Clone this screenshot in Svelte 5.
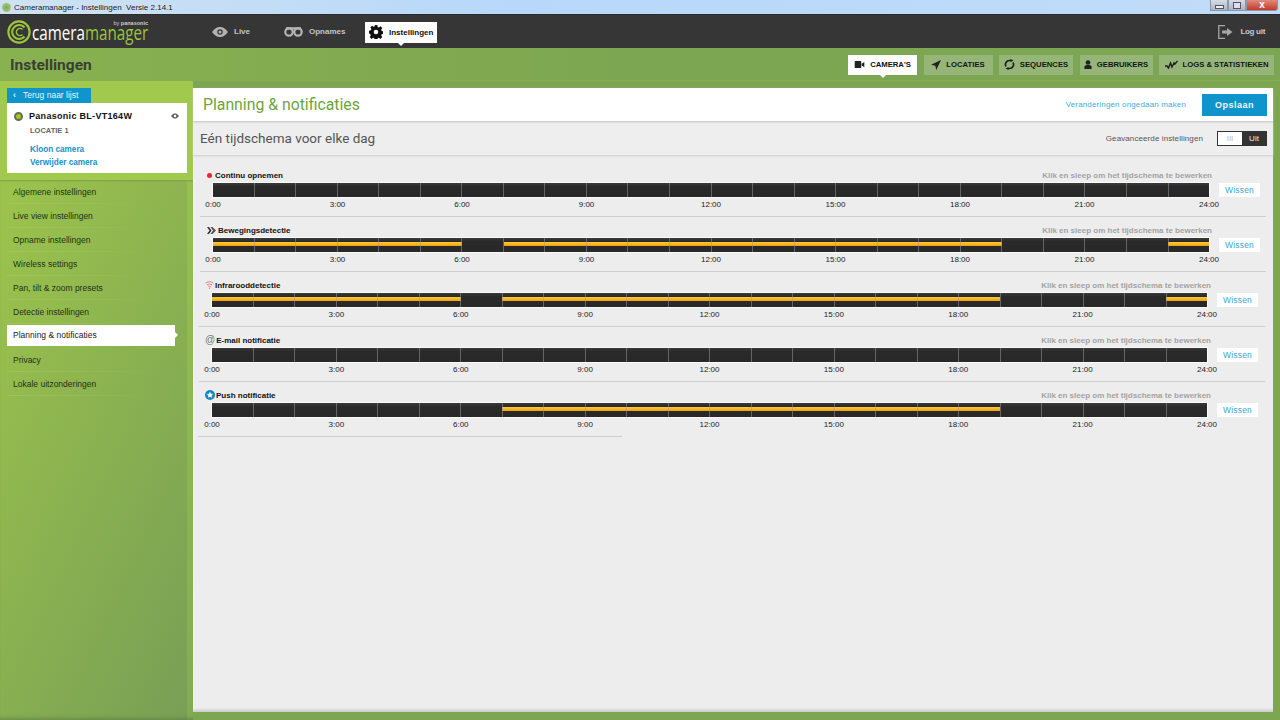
<script lang="ts">
	const menu = [
		'Algemene instellingen',
		'Live view instellingen',
		'Opname instellingen',
		'Wireless settings',
		'Pan, tilt & zoom presets',
		'Detectie instellingen',
		'Planning & notificaties',
		'Privacy',
		'Lokale uitzonderingen'
	];

	const labels = ['0:00', '3:00', '6:00', '9:00', '12:00', '15:00', '18:00', '21:00', '24:00'];
	const hours = Array.from({ length: 24 }, (_, i) => i);

	const rows = [
		{ name: 'Continu opnemen', icon: 'rec', spans: [], shift: false },
		{ name: 'Bewegingsdetectie', icon: 'motion', spans: [[0, 6], [7, 19], [23, 24]], shift: false },
		{ name: 'Infrarooddetectie', icon: 'ir', spans: [[0, 6], [7, 19], [23, 24]], shift: true },
		{ name: 'E-mail notificatie', icon: 'mail', spans: [], shift: true },
		{ name: 'Push notificatie', icon: 'push', spans: [[7, 19]], shift: true }
	];
</script>

<div class="app">
	<div class="titlebar">
		<span class="appicon"></span>
		<span class="wintitle">Cameramanager - Instellingen&nbsp; Versie 2.14.1</span>
		<div class="winbtns">
			<span class="wb"><i class="min"></i></span>
			<span class="wb"><i class="max"></i></span>
			<span class="wb close">x</span>
		</div>
	</div>

	<header class="topnav">
		<div class="logo">
			<svg width="24" height="24" viewBox="0 0 24 24" fill="none" stroke="#9cc43f">
				<circle cx="12" cy="12" r="10.6" stroke-width="2.2" />
				<path d="M17.5 7.5A7 7 0 1 0 17.5 16.5" stroke-width="2" />
				<path d="M15.5 9.5A3.6 3.6 0 1 0 15.5 14.5" stroke-width="1.4" />
			</svg>
			<div class="wordmark">
				<span class="by">by <b>panasonic</b></span>
				<span class="word">camera<em>manager</em></span>
			</div>
		</div>
		<nav class="mainnav">
			<a class="nav live" href="#live">
				<svg width="16" height="10" viewBox="0 0 16 10"><path fill="#b4b4b4" d="M0 5C3 1 5.500 0 8 0s5 1 8 5c-3 4-5.500 5-8 5S3 9 0 5z" /><circle cx="8" cy="5" r="2.800" fill="#363636" /><circle cx="8" cy="5" r="1.500" fill="#b4b4b4" /></svg>
				Live
			</a>
			<a class="nav opn" href="#opnames">
				<svg width="19" height="10" viewBox="0 0 19 10" fill="none" stroke="#b4b4b4" stroke-width="2.200"><circle cx="5" cy="5" r="3.700" /><circle cx="14" cy="5" r="3.700" /><path d="M2 1.300h15" /></svg>
				Opnames
			</a>
			<a class="nav active" href="#instellingen">
				<svg width="14" height="14" viewBox="0 0 14 14"><path fill="#111" fill-rule="evenodd" d="M5.700 0h2.600l.4 1.900 1.200.5 1.600-1.100 1.800 1.800-1.100 1.600.5 1.200 1.900.4v2.600l-1.900.4-.5 1.200 1.100 1.600-1.800 1.800-1.600-1.100-1.200.5-.4 1.900H5.700l-.4-1.900-1.200-.5-1.600 1.100-1.800-1.800 1.100-1.600-.5-1.200L0 8.300V5.700l1.900-.4.500-1.200-1.100-1.600 1.800-1.800 1.600 1.100 1.200-.5zM7 4.700a2.300 2.300 0 1 0 0 4.600 2.300 2.300 0 0 0 0-4.600z" /></svg>
				Instellingen
			</a>
		</nav>
		<a class="logout" href="#logout">
			<svg width="15" height="14" viewBox="0 0 15 14" fill="none" stroke="#a8a8a8"><path d="M7 .7H.8v12.600H7" stroke-width="1.300" /><path fill="#a8a8a8" stroke="none" d="M4 5.500h5V3l5.500 4L9 11V8.500H4z" /></svg>
			Log uit
		</a>
	</header>

	<div class="pagehead">
		<h1>Instellingen</h1>
		<div class="tabs">
			<a class="tab active" href="#cameras">
				<svg width="11" height="7" viewBox="0 0 11 8"><rect width="7.500" height="8" rx="1" fill="#222" /><path fill="#222" d="M8 3l3-2v6L8 5z" /></svg>
				CAMERA'S
			</a>
			<a class="tab" href="#locaties">
				<svg width="10" height="10" viewBox="0 0 11 11"><path fill="#222" d="M11 0L5.800 11 4.700 6.300 0 5.200z" /></svg>
				LOCATIES
			</a>
			<a class="tab" href="#sequences">
				<svg width="11" height="11" viewBox="0 0 11 11" fill="none" stroke="#222" stroke-width="1.700"><path d="M2 7.500A4 4 0 0 1 5.500 1.500H7M9 3.500A4 4 0 0 1 5.500 9.500H4" /><path fill="#222" stroke="none" d="M6.500 0l3 1.500-3 1.800zM4.500 8l-3 1.500 3 1.500z" /></svg>
				SEQUENCES
			</a>
			<a class="tab" href="#gebruikers">
				<svg width="8" height="9" viewBox="0 0 8 10"><circle cx="4" cy="2.800" r="2.600" fill="#222" /><path fill="#222" d="M0 10V7.500C0 6 1.500 5.500 4 5.500s4 .5 4 2V10z" /></svg>
				GEBRUIKERS
			</a>
			<a class="tab" href="#logs">
				<svg width="13" height="9" viewBox="0 0 13 9" fill="none" stroke="#222" stroke-width="1.500"><path d="M0 6h2l1.500 2L5.500 3 7 7l2-4 1 1 2.500-3" /></svg>
				LOGS &amp; STATISTIEKEN
			</a>
		</div>
	</div>

	<div class="main">
		<aside class="sidebar">
			<div class="sidetop">
				<a class="back" href="#back"><span class="chev">‹</span> Terug naar lijst</a>
				<div class="card">
					<div class="cardhead">
						<span class="status"></span>
						<strong>Panasonic BL-VT164W</strong>
						<svg class="cardeye" width="8" height="6" viewBox="0 0 16 10"><path fill="#666" d="M0 5C3 1 5.500 0 8 0s5 1 8 5c-3 4-5.500 5-8 5S3 9 0 5z" /><circle cx="8" cy="5" r="2.500" fill="#fff" /></svg>
					</div>
					<div class="loc">LOCATIE 1</div>
					<a class="cardlink first" href="#kloon">Kloon camera</a>
					<a class="cardlink" href="#verwijder">Verwijder camera</a>
				</div>
			</div>
			<ul class="menu">
				{#each menu as item}
					<li class:active={item === 'Planning & notificaties'}>{item}</li>
				{/each}
			</ul>
		</aside>

		<section class="content">
			<div class="head">
				<h2>Planning &amp; notificaties</h2>
				<a class="undo" href="#undo">Veranderingen ongedaan maken</a>
				<button class="save">Opslaan</button>
			</div>
			<div class="subhead">
				<h3>Eén tijdschema voor elke dag</h3>
				<span class="advlabel">Geavanceerde instellingen</span>
				<div class="toggle"><span class="off">III</span><span class="on">Uit</span></div>
			</div>

			<div class="rows">
				{#each rows as row, i}
					<div class="row" class:shift={row.shift} class:last={i === rows.length - 1}>
						<div class="rowtitle">
							<span class="rowicon {row.icon}">
								{#if row.icon === 'rec'}
									<svg width="5" height="5" viewBox="0 0 5 5"><circle cx="2.500" cy="2.500" r="2.500" fill="#ee2233" /></svg>
								{:else if row.icon === 'motion'}
									<svg width="9" height="7" viewBox="0 0 9 7"><path fill="#333" d="M0 0h2l2.500 3.500L2 7H0l2.500-3.500z" /><path fill="#555" d="M3.500 0h2L9 3.500 5.500 7h-2L6 3.500z" /></svg>
								{:else if row.icon === 'ir'}
									<svg width="9" height="8" viewBox="0 0 9 8" fill="none" stroke="#e8707a" stroke-width="1"><path d="M.5 2.200c2.500-2 5.500-2 8 0M2 4c1.600-1.200 3.400-1.200 5 0M3.300 5.700c.8-.6 1.600-.6 2.400 0" /><circle cx="4.500" cy="7.200" r=".6" fill="#e8707a" stroke="none" /></svg>
								{:else if row.icon === 'mail'}
									<span class="at">@</span>
								{:else}
									<svg width="10" height="10" viewBox="0 0 10 10"><circle cx="5" cy="5" r="5" fill="#1488c0" /><path fill="#fff" d="M5 1.800l1 2 2.200.3-1.600 1.500.4 2.200-2-1-2 1 .4-2.200L1.800 4.100 4 3.800z" /></svg>
								{/if}
							</span>
							<b>{row.name}</b>
							<span class="hint">Klik en sleep om het tijdschema te bewerken</span>
						</div>
						<div class="track">
							<div class="timeline">
								<div class="bar">
									{#each row.spans as [from, to]}
										<span class="span" style="left:{(from / 24) * 100}%;width:{((to - from) / 24) * 100}%"></span>
									{/each}
									<div class="cells">
										{#each hours as h}
											<span class="cell" class:first={h === 0}></span>
										{/each}
									</div>
								</div>
								<div class="labels">
									{#each labels as label}
										<span class="lab"><span>{label}</span></span>
									{/each}
								</div>
							</div>
							<button class="wissen">Wissen</button>
						</div>
					</div>
				{/each}
				<div class="enddivider"></div>
			</div>
		</section>
	</div>
</div>

<style>
	:global(body) {
		margin: 0;
		font-family: 'Liberation Sans', Arial, sans-serif;
	}

	a {
		text-decoration: none;
		color: inherit;
	}

	.app {
		width: 1280px;
		height: 720px;
		display: flex;
		flex-direction: column;
		overflow: hidden;
		background: #7ca651;
	}

	.titlebar {
		height: 14px;
		flex: none;
		display: flex;
		align-items: center;
		padding-left: 2px;
		background: linear-gradient(90deg, #cfe2f2, #b7d8fa 40%, #c0dcf8);
		font-size: 8px;
		color: #222;
	}

	.appicon {
		width: 9px;
		height: 9px;
		border-radius: 50%;
		margin-right: 3px;
		background: radial-gradient(circle, #7bb043, #b5c9a0);
	}

	.winbtns {
		margin-left: auto;
		margin-right: 2px;
		margin-top: -3px;
		display: flex;
		height: 11px;
	}

	.wb {
		width: 18px;
		height: 11px;
		display: flex;
		align-items: center;
		justify-content: center;
		border: 1px solid #8a97a6;
		border-top: 0;
		box-sizing: border-box;
		background: linear-gradient(#d5dde6, #a9b5c4);
	}

	.wb.close {
		width: 32px;
		border-radius: 0 0 3px 0;
		background: linear-gradient(#e08a7c, #c2392b);
		color: #fff;
		font-weight: bold;
		font-size: 10px;
		line-height: 1;
	}

	.min {
		width: 7px;
		height: 2px;
		margin-top: 3px;
		background: #eef;
		border: 1px solid #556;
	}

	.max {
		width: 6px;
		height: 5px;
		border: 1px solid #556;
		background: #dde;
	}

	.topnav {
		height: 34px;
		flex: none;
		box-sizing: border-box;
		display: flex;
		align-items: center;
		background: #363636;
		border-top: 1px solid #2b2b2b;
		padding: 0 15px 0 7px;
	}

	.logo {
		display: flex;
		align-items: center;
		width: 205px;
		flex: none;
		gap: 1px;
	}

	.wordmark {
		width: 116px;
		display: flex;
		flex-direction: column;
		align-items: flex-end;
		margin-top: -4px;
	}

	.by {
		font-size: 5.500px;
		line-height: 6px;
		color: #cfcfcf;
	}

	.word {
		align-self: flex-start;
		font-family: 'Open Sans', sans-serif;
		font-weight: 400;
		font-size: 20px;
		line-height: 14px;
		white-space: nowrap;
		color: #fff;
		transform: scaleX(0.76);
		transform-origin: left center;
	}

	.word em {
		font-style: normal;
		color: #9cc43f;
	}

	.mainnav {
		display: flex;
		align-items: center;
	}

	.nav {
		display: flex;
		align-items: center;
		gap: 6px;
		font-size: 8px;
		color: #c4c4c4;
		font-weight: bold;
	}

	.live {
		width: 72px;
	}

	.opn {
		width: 81px;
	}

	.nav.active {
		position: relative;
		box-sizing: border-box;
		width: 72px;
		height: 21px;
		padding-left: 4px;
		background: #fff;
		color: #111;
		margin-top: 1px;
	}

	.nav.active::after,
	.tab.active::after {
		content: '';
		position: absolute;
		left: 50%;
		bottom: -3px;
		margin-left: -3px;
		border: 3px solid transparent;
		border-bottom: 0;
		border-top-color: #fff;
	}

	.logout {
		margin-left: auto;
		display: flex;
		align-items: center;
		gap: 7px;
		font-size: 8px;
		font-weight: bold;
		letter-spacing: -0.3px;
		color: #c8c8c8;
	}

	.pagehead {
		height: 33px;
		flex: none;
		display: flex;
		align-items: center;
		padding: 0 6px 0 10px;
		background: linear-gradient(90deg, #88b150, #7ca651 50%);
		box-shadow: inset 0 -1px 0 #86ae50;
	}

	h1 {
		margin: 0;
		font-family: Roboto, sans-serif;
		font-size: 15.500px;
		font-weight: 700;
		color: #3a3f36;
	}

	.tabs {
		margin-left: auto;
		display: grid;
		grid-template-columns: 69px 69px 74px 73px 115px;
		gap: 6.500px;
	}

	.tab {
		position: relative;
		height: 20px;
		display: flex;
		align-items: center;
		justify-content: center;
		gap: 5px;
		background: #95b678;
		font-size: 7.700px;
		font-weight: bold;
		white-space: nowrap;
		color: #141414;
	}

	.tab.active {
		background: #fff;
		color: #111;
	}

	.main {
		flex: 1;
		min-height: 0;
		display: flex;
	}

	.sidebar {
		width: 193px;
		flex: none;
		display: flex;
		flex-direction: column;
	}

	.sidetop {
		height: 99px;
		flex: none;
		box-sizing: border-box;
		padding: 7px 6px 0 7px;
		background: #a1c94e;
	}

	.back {
		display: block;
		width: 84px;
		height: 15px;
		box-sizing: border-box;
		padding-left: 6px;
		line-height: 15px;
		background: #0f94cb;
		color: #e6f4fa;
		font-size: 8.500px;
	}

	.chev {
		font-weight: bold;
		margin-right: 5px;
	}

	.card {
		height: 70px;
		box-sizing: border-box;
		padding: 7px 8px 0 7px;
		background: #fff;
	}

	.cardhead {
		display: flex;
		align-items: center;
		gap: 6px;
		height: 12px;
	}

	.cardhead strong {
		font-size: 9px;
		letter-spacing: 0.3px;
		color: #111;
		flex: 1;
	}

	.status {
		width: 5px;
		height: 5px;
		border-radius: 50%;
		background: #a0c820;
		border: 2px solid #666f55;
	}

	.loc {
		margin: 4px 0 0 16px;
		font-size: 7.500px;
		font-weight: bold;
		color: #666;
	}

	.cardlink {
		display: block;
		margin-left: 16px;
		margin-top: 3px;
		font-size: 8.200px;
		font-weight: bold;
		line-height: 10px;
		color: #1690c9;
	}

	.cardlink.first {
		margin-top: 10px;
	}

	.menu {
		flex: 1;
		list-style: none;
		margin: 0;
		padding: 0;
		background:
			linear-gradient(115deg, #9cc44c, #789f55) 0 0 / 187px 100% no-repeat,
			linear-gradient(#96c04f, #82ac54);
		box-shadow: inset 0 2px 2px -1px #7e9f4a, inset 0 -6px 5px -5px #5f8245;
	}

	.menu li {
		position: relative;
		width: 168px;
		height: 24px;
		margin-left: 7px;
		box-sizing: border-box;
		padding-left: 6px;
		line-height: 24px;
		font-size: 8.500px;
		color: #26301a;
		background: linear-gradient(90deg, #a7cc5c88, #a7cc5c00 90%) bottom / 100% 1px no-repeat;
	}

	.menu li.active {
		background: #fff;
		height: 21px;
		line-height: 21px;
		margin-top: 1px;
		margin-bottom: 2px;
		color: #222;
	}

	.menu li.active::after {
		content: '';
		position: absolute;
		right: -3px;
		top: 7px;
		border: 3px solid transparent;
		border-right: 0;
		border-left-color: #fff;
	}

	.content {
		width: 1080px;
		height: 624px;
		margin-top: 7px;
		display: flex;
		flex-direction: column;
		background: #ededed;
		box-shadow: inset 0 -4px 3px -2px #c9c9c9, inset 1px 0 0 #f6f6f6;
	}

	.head {
		height: 33px;
		flex: none;
		display: flex;
		align-items: center;
		padding: 0 6px 0 10px;
		background: #fff;
		box-shadow: 0 1px 2px #c4c4c4;
		z-index: 1;
	}

	h2 {
		margin: 0;
		font-family: Roboto, sans-serif;
		font-size: 15.800px;
		font-weight: 400;
		color: #6ea53c;
	}

	.undo {
		margin-left: auto;
		font-size: 8px;
		letter-spacing: 0.15px;
		color: #45acd8;
	}

	.save {
		width: 65px;
		height: 22px;
		margin-left: 16px;
		border: 0;
		padding: 0;
		background: #0f94cb;
		color: #f0f8fc;
		font: bold 9px 'Liberation Sans', sans-serif;
		letter-spacing: 0.5px;
	}

	.subhead {
		height: 34px;
		flex: none;
		box-sizing: border-box;
		display: flex;
		align-items: center;
		padding: 0 6px 0 7px;
		background: #eeeeee;
		box-shadow: 0 1px 2px #cccccc;
	}

	h3 {
		margin: 0;
		font-family: Roboto, sans-serif;
		font-size: 13.500px;
		font-weight: 400;
		color: #555;
	}

	.advlabel {
		margin-left: auto;
		font-size: 8px;
		letter-spacing: 0.1px;
		color: #555;
	}

	.toggle {
		display: flex;
		width: 50px;
		height: 15px;
		margin-left: 14px;
		box-sizing: border-box;
		border: 1px solid #333;
		font-size: 8px;
		line-height: 13px;
		text-align: center;
	}

	.off {
		width: 24px;
		background: #fff;
		color: #bbb;
	}

	.on {
		flex: 1;
		background: #333;
		color: #eee;
	}

	.rows {
		padding-top: 7px;
	}

	.row {
		height: 55px;
		box-sizing: border-box;
		margin: 0 7px;
		padding: 6px 0 0 13px;
		border-bottom: 1px solid #cfcfcf;
	}

	.row.shift {
		margin: 0 8px 0 6px;
	}

	.row.last {
		border-bottom: 0;
	}

	.enddivider {
		width: 424px;
		height: 1px;
		margin: -1px 0 0 5px;
		background: #cfcfcf;
	}

	.rowtitle {
		width: 999px;
		height: 14px;
		display: flex;
		align-items: center;
		font-size: 8px;
		color: #111;
	}

	.rowicon {
		display: flex;
		align-items: center;
		margin-right: 3px;
		margin-left: -6px;
	}

	.shift .rowicon {
		margin-left: -7px;
		margin-right: 1px;
	}

	.rowicon.motion {
		margin-right: 2px;
	}

	.shift .rowicon.mail {
		margin-right: 1px;
	}

	.at {
		font-size: 10px;
		line-height: 10px;
		color: #777;
		font-weight: normal;
	}

	.hint {
		margin-left: auto;
		font-weight: bold;
		color: #a3a3a3;
	}

	.track {
		display: flex;
		align-items: flex-start;
		gap: 10px;
		margin-top: 1px;
	}

	.timeline {
		width: 996px;
		flex: none;
	}

	.shift .timeline {
		width: 995px;
	}

	.bar {
		position: relative;
		height: 14px;
		box-sizing: border-box;
		background: linear-gradient(#3a3a3a, #2a2a2a 25%, #282828);
		box-shadow: 0 0 0 1px #fafafa;
		overflow: hidden;
	}

	.span {
		position: absolute;
		top: 4px;
		height: 4px;
		background: linear-gradient(#ffcc33, #f0a010);
	}

	.cells {
		position: absolute;
		inset: 0;
		display: flex;
	}

	.cell {
		flex: 1;
		box-sizing: border-box;
		border-left: 1px solid rgba(150, 150, 150, 0.55);
	}

	.cell.first {
		border-left: 0;
	}

	.labels {
		display: flex;
		justify-content: space-between;
		height: 14px;
		font-size: 8px;
		line-height: 15px;
		color: #222;
	}

	.lab {
		width: 0;
		display: flex;
		justify-content: center;
		white-space: nowrap;
	}

	.wissen {
		width: 41px;
		height: 14px;
		padding: 0;
		border: 0;
		background: #fff;
		font: 8.500px 'Liberation Sans', sans-serif;
		letter-spacing: 0.2px;
		color: #3aa6d6;
	}
</style>
